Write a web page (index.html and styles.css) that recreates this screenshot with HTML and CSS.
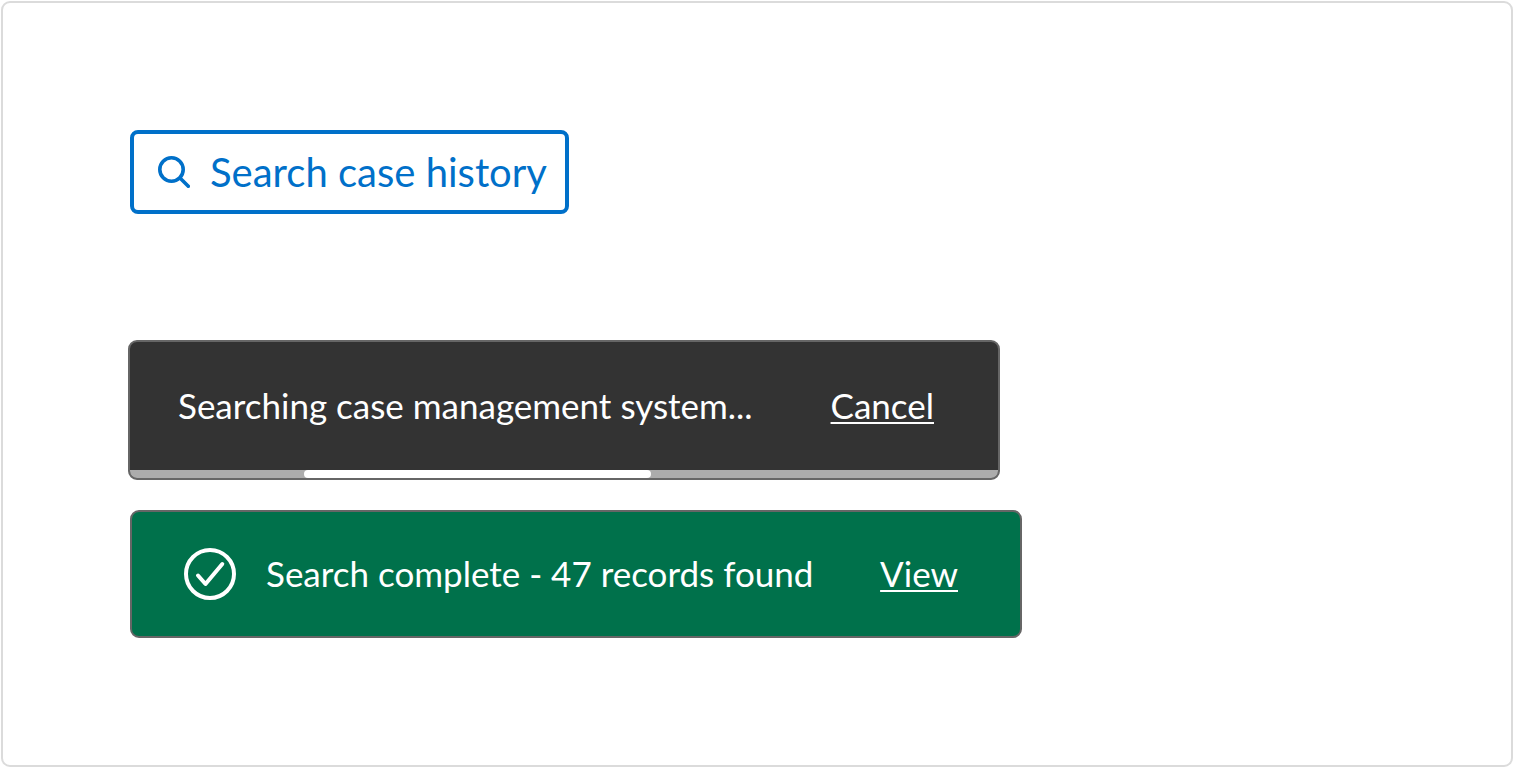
FILE: index.html
```html
<!DOCTYPE html>
<html lang="en">
<head>
<meta charset="utf-8">
<meta name="viewport" content="width=device-width, initial-scale=1">
<title>Search case history</title>
<link rel="stylesheet" href="styles.css">
</head>
<body>
<main class="frame">
  <button type="button" class="search-button">
    <svg class="search-icon" viewBox="0 0 32 32" aria-hidden="true"><circle cx="13.5" cy="13.5" r="11.7"/><path d="M22 22l8.3 8.3"/></svg>
    <span>Search case history</span>
  </button>
  <div class="toasts">
    <section class="toast toast-progress" role="status">
      <div class="toast-body">
        <span class="toast-message">Searching case management system...</span>
        <button type="button" class="toast-action">Cancel</button>
      </div>
      <div class="progress" role="progressbar" aria-label="Searching"><div class="progress-bar"></div></div>
    </section>
    <section class="toast toast-success" role="status">
      <div class="toast-body">
        <svg class="check-icon" viewBox="0 0 52 52" aria-hidden="true"><circle cx="26" cy="26" r="24"/><path d="M14 27.5l7.5 8.5L38.3 16"/></svg>
        <span class="toast-message">Search complete - 47 records found</span>
        <a href="#records" class="toast-action">View</a>
      </div>
    </section>
  </div>
</main>
</body>
</html>
```
FILE: styles.css
```css
* { box-sizing: border-box; }

body {
  margin: 0;
  padding: 1px 0 0 1px;
  background: #fff;
  font-family: Lato, "Liberation Sans", sans-serif;
}

.frame {
  display: flex;
  flex-direction: column;
  align-items: flex-start;
  gap: 126px;
  min-height: calc(100vh - 1px);
  padding: 127px;
  border: 2px solid #dbdbdb;
  border-radius: 9px;
}

.search-button {
  display: flex;
  align-items: center;
  gap: 20px;
  padding: 14px 18px 14px 24px;
  border: 4px solid #0070c9;
  border-radius: 8px;
  background: #fff;
  color: #0070c9;
  font: inherit;
  font-size: 40px;
  line-height: 48px;
  cursor: pointer;
}

.search-icon {
  width: 32px;
  height: 32px;
  fill: none;
  stroke: currentColor;
  stroke-width: 3.6;
  stroke-linecap: round;
}

.toasts {
  display: flex;
  flex-direction: column;
  align-items: flex-start;
  gap: 30px;
}

.toast {
  max-width: 100%;
  border: 2px solid #666;
  border-radius: 9px;
  color: #fff;
  font-size: 35px;
  line-height: 48px;
  overflow: hidden;
}

.toast-body {
  display: flex;
  align-items: center;
}

.toast-message {
  flex: 1;
  padding-bottom: 2px;
}

.toast-action {
  padding: 0 0 2px;
  border: 0;
  background: none;
  color: inherit;
  font: inherit;
  text-decoration: underline;
  text-decoration-thickness: 2px;
  text-underline-offset: 3px;
  cursor: pointer;
}

.toast-progress {
  width: 872px;
  margin-left: -2px;
  background: #333;
}

.toast-progress .toast-body { padding: 39px 64px 39px 48px; }

.progress {
  height: 8px;
  background: #acacac;
}

.progress-bar {
  width: 40%;
  height: 8px;
  margin-left: 20%;
  border-radius: 4px;
  background: #fff;
}

.toast-success {
  width: 892px;
  background: #00714b;
}

.toast-success .toast-body {
  gap: 30px;
  padding: 36px 62px 36px 52px;
}

.check-icon {
  width: 52px;
  height: 52px;
  fill: none;
  stroke: currentColor;
  stroke-width: 4;
  stroke-linecap: round;
  stroke-linejoin: round;
}
```
